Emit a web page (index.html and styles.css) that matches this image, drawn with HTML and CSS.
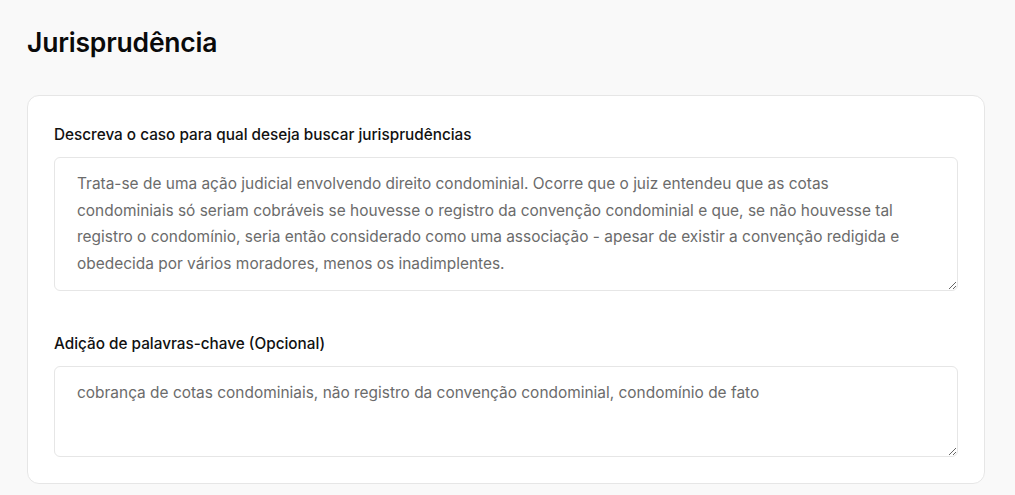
FILE: index.html
```html
<!DOCTYPE html>
<html lang="pt">
<head>
<meta charset="utf-8">
<link rel="stylesheet" href="styles.css">
</head>
<body>
<main class="page">
  <h1 class="title">Jurisprudência</h1>
  <section class="card">
    <div class="field">
      <label class="label" for="caso">Descreva o caso para qual deseja buscar jurisprudências</label>
      <textarea id="caso" class="input input-tall">Trata-se de uma ação judicial envolvendo direito condominial. Ocorre que o juiz entendeu que as cotas condominiais só seriam cobráveis se houvesse o registro da convenção condominial e que, se não houvesse tal registro o condomínio, seria então considerado como uma associação - apesar de existir a convenção redigida e obedecida por vários moradores, menos os inadimplentes.</textarea>
    </div>
    <div class="field">
      <label class="label" for="chaves">Adição de palavras-chave (Opcional)</label>
      <textarea id="chaves" class="input input-short">cobrança de cotas condominiais, não registro da convenção condominial, condomínio de fato</textarea>
    </div>
  </section>
</main>
</body>
</html>
```

FILE: styles.css
```css
* { box-sizing: border-box; }
html, body { margin: 0; padding: 0; }
body {
  background: #f9f9f9;
  font-family: Inter, "Liberation Sans", sans-serif;
  color: #111;
}
.page {
  padding: 26px 30px 0 27px;
}
.title {
  margin: 0 0 37px 0;
  font-size: 26.5px;
  line-height: 32px;
  font-weight: 600;
  color: #0a0a0a;
  letter-spacing: -0.2px;
}
.card {
  background: #fff;
  border: 1px solid #e6e6e6;
  border-radius: 12px;
  padding: 29px 26px 26px 26px;
  display: flex;
  flex-direction: column;
  gap: 43px;
}
.field {
  display: flex;
  flex-direction: column;
  gap: 12px;
}
.label {
  font-size: 15.3px;
  line-height: 20px;
  font-weight: 500;
  color: #111;
}
.input {
  display: block;
  width: 100%;
  border: 1px solid #e6e6e6;
  border-radius: 6px;
  padding: 13px 44px 13px 22px;
  font-family: Inter, "Liberation Sans", sans-serif;
  font-size: 15.45px;
  line-height: 26.5px;
  color: #6b6b6b;
  background: #fff;
  resize: vertical;
  outline: none;
}
.input-tall { height: 134px; }
.input-short { height: 91px; }
```
